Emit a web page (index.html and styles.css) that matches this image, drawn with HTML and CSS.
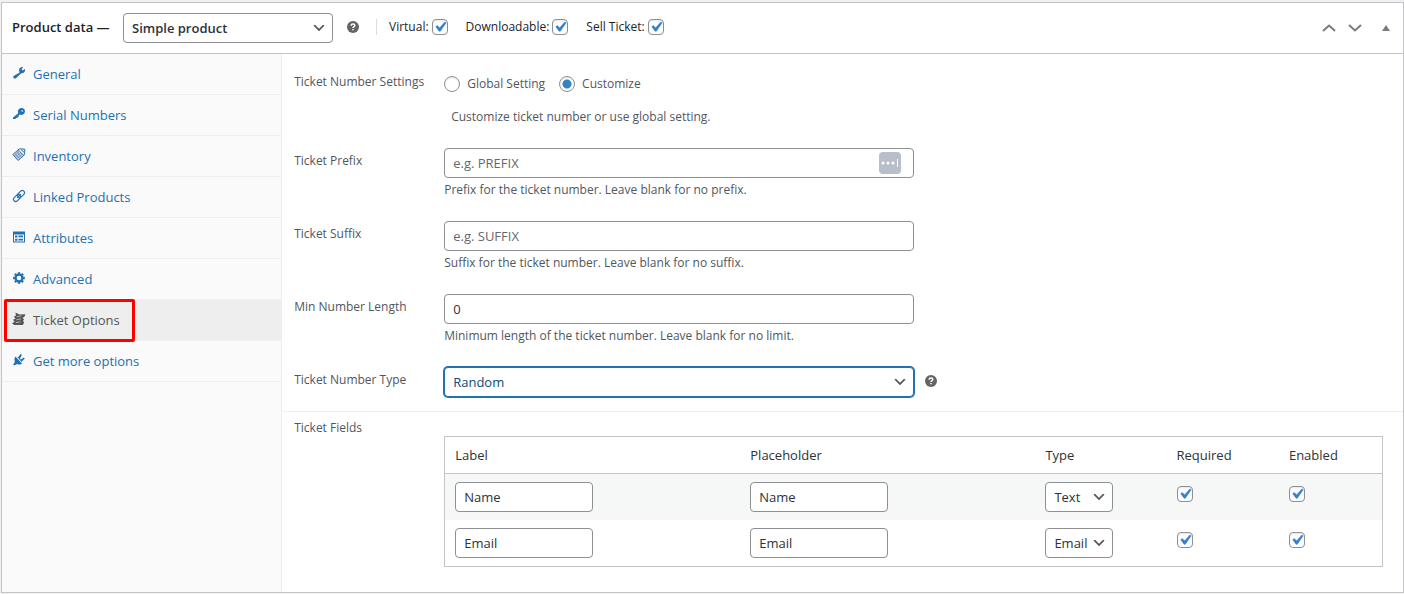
FILE: index.html
```html
<!DOCTYPE html>
<html lang="en">
<head>
<meta charset="utf-8">
<meta name="viewport" content="width=device-width, initial-scale=1">
<title>Product data</title>
<link rel="stylesheet" href="styles.css">
</head>
<body>
<section class="panel">
  <header class="panel-header">
    <label class="panel-title" for="product-type">Product data —</label>
    <select class="select product-type" id="product-type"><option>Simple product</option></select>
    <svg class="help" viewBox="0 0 12 12" role="img" aria-label="Help"><circle cx="6" cy="6" r="6"/><path d="M4.2 4.7Q4.2 3 6 3T7.8 4.5Q7.8 5.3 6.8 5.8Q6 6.2 6 7M6 8.1V9.3"/></svg>
    <div class="flags">
      <label class="flag">Virtual: <input class="check" type="checkbox" checked></label>
      <label class="flag">Downloadable: <input class="check" type="checkbox" checked></label>
      <label class="flag">Sell Ticket: <input class="check" type="checkbox" checked></label>
    </div>
    <div class="handles">
      <button class="handle" type="button" aria-label="Move up"><svg width="14" height="8" viewBox="0 0 14 8"><path class="chevron" d="M1 7L7 1.5L13 7"/></svg></button>
      <button class="handle" type="button" aria-label="Move down"><svg width="14" height="8" viewBox="0 0 14 8"><path class="chevron" d="M1 1L7 6.5L13 1"/></svg></button>
      <button class="handle" type="button" aria-label="Toggle panel"><svg width="8" height="6" viewBox="0 0 8 6"><path class="solid" d="M4 0L8 6H0Z"/></svg></button>
    </div>
  </header>
  <div class="panel-body">
    <nav class="tabs">
      <a class="tab" href="#"><svg class="tab-icon" viewBox="0 0 14 14"><path d="M7.6 6.4Q6.2 3.5 8.2 1.7Q9.6 .6 11.3 1.1L9.6 3L10.6 4.4L13 3Q13.5 5 12.2 6.3Q11 7.5 9.2 7.3L4.2 12.1Q2.7 13.1 1.6 12.1Q.7 11 1.6 9.9Z"/></svg>General</a>
      <a class="tab" href="#"><svg class="tab-icon" viewBox="0 0 14 14"><path fill-rule="evenodd" d="M6.2 6.2Q5.2 3.8 6.7 2.2Q8.2.7 10.3 1Q12.9 1.4 13 4Q13 6.2 11.4 7.3Q9.8 8.3 7.8 7.6L6.7 8.7V9.8H5.5V11H4.3L3.3 12H1V10.4ZM9.6 3.1A1 1 0 1 0 11.3 4.1Z"/></svg>Serial Numbers</a>
      <a class="tab" href="#"><svg class="tab-icon" viewBox="0 0 14 14"><path class="cards" d="M.8 6.5L6.2 2L11.8 7.5L6 12.5Z"/><path class="line" d="M5.5 2.2L7.5 .8L12.8 1.2L12.6 5.8L11.8 7.5M9 1.6L12.4 4.6"/><path class="hatch" d="M2.2 7.8L7.6 3.2M3.4 9L9 4.6M4.6 10.4L10.4 6M2.6 5.2L8 11M4.4 3.6L9.8 9.4"/></svg>Inventory</a>
      <a class="tab" href="#"><svg class="tab-icon" viewBox="0 0 14 14"><g class="link" transform="rotate(-45 7 7)"><rect x="0.2" y="4.8" width="8" height="4.4" rx="2.2"/><rect x="5.8" y="4.8" width="8" height="4.4" rx="2.2"/><path d="M4.5 7H9.5"/></g></svg>Linked Products</a>
      <a class="tab" href="#"><svg class="tab-icon" viewBox="0 0 14 14"><path fill-rule="evenodd" d="M1 1.5H13V12.5H1ZM2 4.5V11.5H12V4.5Z"/><path d="M3 5.5H5.5V7.5H3ZM3 8.7H5.5V10.7H3ZM6.5 5.5H11V7.2H6.5ZM6.5 8.7H11V10.4H6.5Z"/></svg>Attributes</a>
      <a class="tab" href="#"><svg class="tab-icon" viewBox="0 0 14 14"><circle class="gear" cx="7" cy="7" r="3.4"/><path class="teeth" d="M7 1.2V3M7 11V12.8M1.2 7H3M11 7H12.8M2.9 2.9L4.2 4.2M9.8 9.8L11.1 11.1M2.9 11.1L4.2 9.8M9.8 4.2L11.1 2.9"/></svg>Advanced</a>
      <a class="tab active" href="#" aria-current="page"><svg class="tab-icon" viewBox="0 0 14 14"><path d="M3.4 .6L7.5 2.4L13.4 2.2L12.4 4.8L10.6 5.8L12 7.6L11 8.8L12 10.2L11 13H2.2L0 11.2L2.6 9.8L1 7.8L3.6 6.6L1.8 4.8L4 3.4Z"/><path class="cut" d="M4.6 4.8L9.4 3.8M4.4 7.8L9 6.8M3.8 10.6L8.6 9.8"/></svg>Ticket Options<span class="marker"></span></a>
      <a class="tab" href="#"><svg class="tab-icon" viewBox="0 0 14 14"><path d="M3.4 3.6L10 10.4Q7.6 12.4 5.2 11L2 12.4L1.2 11.4L2.8 9Q1.6 6 3.4 3.6ZM4.8 3.6L6.2 4.2L8.6 1L9.9 2L8 5.4L9 6.4L11.8 4.4L12.8 5.6L9.8 8.4L10.2 9.4Z"/></svg>Get more options</a>
    </nav>
    <form class="content">
      <div class="fields">
        <div class="field">
          <span class="field-label">Ticket Number Settings</span>
          <div class="field-control">
            <div class="radios">
              <label class="radio-label"><input class="radio" type="radio" name="mode">Global Setting</label>
              <label class="radio-label"><input class="radio" type="radio" name="mode" checked>Customize</label>
            </div>
            <p class="note">Customize ticket number or use global setting.</p>
          </div>
        </div>
        <div class="field">
          <label class="field-label" for="prefix">Ticket Prefix</label>
          <div class="field-control">
            <div class="input-wrap">
              <input class="input" id="prefix" type="text" placeholder="e.g. PREFIX">
              <svg class="autofill" viewBox="0 0 22 22"><rect width="22" height="22" rx="4"/><circle cx="4" cy="11" r="1.5"/><circle cx="9" cy="11" r="1.5"/><circle cx="14" cy="11" r="1.5"/><path d="M18.5 7V15"/></svg>
            </div>
            <p class="hint">Prefix for the ticket number. Leave blank for no prefix.</p>
          </div>
        </div>
        <div class="field">
          <label class="field-label" for="suffix">Ticket Suffix</label>
          <div class="field-control">
            <div class="input-wrap"><input class="input" id="suffix" type="text" placeholder="e.g. SUFFIX"></div>
            <p class="hint">Suffix for the ticket number. Leave blank for no suffix.</p>
          </div>
        </div>
        <div class="field">
          <label class="field-label" for="min-length">Min Number Length</label>
          <div class="field-control">
            <div class="input-wrap"><input class="input" id="min-length" type="text" value="0"></div>
            <p class="hint">Minimum length of the ticket number. Leave blank for no limit.</p>
          </div>
        </div>
        <div class="field">
          <label class="field-label" for="number-type">Ticket Number Type</label>
          <div class="field-control with-help">
            <div class="input-wrap"><select class="select number-type" id="number-type"><option>Random</option></select></div>
            <svg class="help" viewBox="0 0 12 12" role="img" aria-label="Help"><circle cx="6" cy="6" r="6"/><path d="M4.2 4.7Q4.2 3 6 3T7.8 4.5Q7.8 5.3 6.8 5.8Q6 6.2 6 7M6 8.1V9.3"/></svg>
          </div>
        </div>
      </div>
      <div class="table-section">
        <span class="field-label large">Ticket Fields</span>
        <table class="table">
          <colgroup><col class="col-text"><col class="col-text"><col class="col-type"><col class="col-required"><col></colgroup>
          <thead><tr><th>Label</th><th>Placeholder</th><th>Type</th><th>Required</th><th>Enabled</th></tr></thead>
          <tbody>
            <tr>
              <td><input class="input cell" type="text" value="Name" aria-label="Label"></td>
              <td><input class="input cell" type="text" value="Name" aria-label="Placeholder"></td>
              <td><select class="select type" aria-label="Type"><option>Text</option></select></td>
              <td class="check-cell"><input class="check" type="checkbox" checked aria-label="Required"></td>
              <td class="check-cell"><input class="check" type="checkbox" checked aria-label="Enabled"></td>
            </tr>
            <tr>
              <td><input class="input cell" type="text" value="Email" aria-label="Label"></td>
              <td><input class="input cell" type="text" value="Email" aria-label="Placeholder"></td>
              <td><select class="select type" aria-label="Type"><option>Email</option></select></td>
              <td class="check-cell"><input class="check" type="checkbox" checked aria-label="Required"></td>
              <td class="check-cell"><input class="check" type="checkbox" checked aria-label="Enabled"></td>
            </tr>
          </tbody>
        </table>
      </div>
    </form>
  </div>
</section>
</body>
</html>
```
FILE: styles.css
```css
* { box-sizing: border-box; }

body {
  margin: 0;
  padding: 2px 0 1px 1px;
  background: #f0f0f1;
  color: #1d2327;
  font: 13px/20px "Open Sans", "Noto Sans", sans-serif;
}

p { margin: 0; }

input, select, button { font: inherit; color: inherit; margin: 0; }

.panel { border: 1px solid #c3c4c7; background: #fff; }

.panel-header {
  display: flex;
  align-items: center;
  min-height: 51px;
  padding: 0 13px 0 10px;
  border-bottom: 1px solid #c3c4c7;
}

.panel-title { width: 111px; font-weight: 600; white-space: nowrap; padding-bottom: 2px; }

.input, .select {
  height: 30px;
  border: 1px solid #8c8f94;
  border-radius: 4px;
  background-color: #fff;
  color: #2c3338;
  padding: 0 8px;
}

.input::placeholder { color: #646970; opacity: 1; }

.select {
  appearance: none;
  padding-right: 24px;
  background-image: url("data:image/svg+xml,%3Csvg xmlns='http://www.w3.org/2000/svg' viewBox='0 0 20 20'%3E%3Cpath d='M5 6l5 5 5-5 2 1-7 7-7-7 2-1z' fill='%23555'/%3E%3C/svg%3E");
  background-repeat: no-repeat;
  background-position: right 5px center;
  background-size: 16px 16px;
}

.product-type { width: 210px; font-weight: 600; }

.help { flex: none; width: 12px; height: 12px; margin-bottom: 3px; fill: #646464; }
.help path { fill: none; stroke: #fff; stroke-width: 1.5; }
.panel-header .help { margin-left: 14px; margin-right: 17px; }

.flags {
  display: flex;
  align-items: center;
  gap: 18px;
  height: 16px;
  margin-bottom: 3px;
  padding-left: 12px;
  border-left: 1px solid #dcdcde;
  font-size: 12px;
  color: #1d2327;
}

.flag { display: flex; align-items: center; gap: 3px; white-space: nowrap; }

.check, .radio {
  appearance: none;
  flex: none;
  width: 16px;
  height: 16px;
  border: 1px solid #8c8f94;
  background-color: #fff;
  box-shadow: inset 0 1px 2px rgba(0, 0, 0, .1);
}

.check { display: block; border-radius: 4px; }

.check:checked {
  background-image: url("data:image/svg+xml,%3Csvg xmlns='http://www.w3.org/2000/svg' viewBox='0 0 20 20'%3E%3Cpath d='M14.83 4.89l1.34.94-5.81 8.38H9.02L5.78 9.67l1.34-1.25 2.57 2.4z' fill='%233582c4' stroke='%233582c4' stroke-width='.5'/%3E%3C/svg%3E");
  background-position: center;
  background-size: 20px 20px;
}

.radio { border-radius: 50%; }

.radio:checked { background-image: radial-gradient(circle, #3582c4 0 4px, transparent 5px); }

.handles { display: flex; align-items: center; gap: 12px; margin-left: auto; }
.handle { display: flex; padding: 0; border: 0; background: none; }
.handle:last-child { margin-left: 8px; }
.chevron { fill: none; stroke: #787c82; stroke-width: 2; }
.solid { fill: #787c82; }

.panel-body { display: flex; }

.tabs { flex: 0 0 20%; border-right: 1px solid #eee; background: #fafafa; }

.tab {
  position: relative;
  display: flex;
  gap: 7px;
  padding: 10px;
  border-bottom: 1px solid #eee;
  color: #2271b1;
  text-decoration: none;
}

.tab-icon { flex: none; width: 14px; height: 14px; margin-top: 2px; fill: currentColor; }
.tab.active { background: #eee; color: #555; }

.marker {
  position: absolute;
  top: -1px;
  left: 2px;
  width: 131px;
  height: 43px;
  border: 3px solid #f00;
  border-radius: 2px;
  z-index: 1;
}

.cards { fill: #b9cde0; stroke: #3a76aa; }
.line { fill: none; stroke: #2271b1; }
.hatch { fill: none; stroke: #5f8fba; stroke-width: 0.6; }
.link { fill: none; stroke: #2271b1; stroke-width: 1.2; }
.gear { fill: none; stroke: currentColor; stroke-width: 2.2; }
.teeth { stroke: currentColor; stroke-width: 2.4; }
.cut { fill: none; stroke: #ccc; stroke-width: 0.8; }

.content { flex: 1; min-width: 0; color: #50575e; }

.fields { padding: 18px 20px 14px 12px; border-bottom: 1px solid #eee; }

.field { display: flex; margin-bottom: 20px; }
.field:last-child { margin-bottom: 0; }

.field-label { flex: 0 0 150px; padding-top: 3px; font-size: 12px; }
.field:first-child .field-label { padding-top: 0; }

.field-control { flex: 1; min-width: 0; }
.input-wrap { position: relative; width: 50%; }
.input-wrap .input, .input-wrap .select { display: block; width: 100%; }
.hint { padding: 2px 0 1px; font-size: 12px; }

.radios { display: flex; gap: 14px; padding-top: 2px; font-size: 12px; }
.radio-label { display: flex; align-items: center; gap: 7px; }
.note { padding: 13px 0 1px 7px; font-size: 12px; }

.autofill { position: absolute; top: 4px; right: 13px; width: 22px; height: 22px; fill: #fff; stroke: #fff; }
.autofill rect { fill: #b8bfca; stroke: none; }
.autofill circle { stroke: none; }

.with-help { display: flex; align-items: center; gap: 11px; }
.number-type { border-color: #2271b1; box-shadow: 0 0 0 1px #2271b1; color: #0a4b78; }

.table-section { display: flex; padding: 0 20px 25px 12px; }
.large { padding-top: 6px; }

.table {
  flex: 1;
  margin-top: 24px;
  table-layout: fixed;
  border: 1px solid #c3c4c7;
  border-spacing: 0;
  color: #2c3338;
}

.table th { height: 37px; padding: 0 10px; border-bottom: 1px solid #c3c4c7; font-weight: 400; text-align: left; }
.table td { height: 46px; padding: 8px 10px; vertical-align: top; }
.table tbody tr:nth-child(odd) { background: #f6f7f7; }
.table .check-cell { padding-top: 12px; }
.table .input, .table .select { display: block; }
.cell { width: 50%; }
.type { width: 68px; }
.col-text { width: 31.5%; }
.col-type { width: 14%; }
.col-required { width: 12%; }
```
